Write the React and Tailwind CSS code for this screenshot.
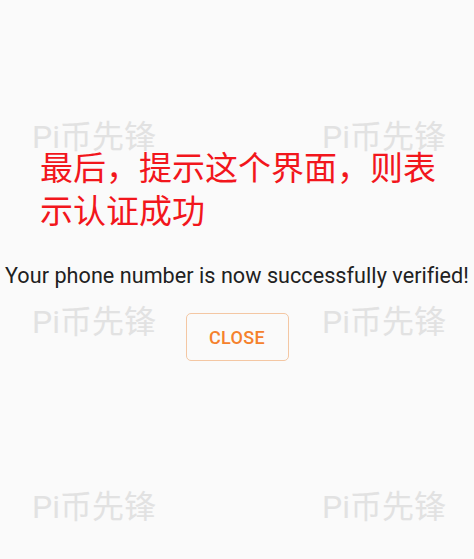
import React from 'react'

const font = { fontFamily: 'Roboto, "Noto Sans CJK SC", sans-serif' }

// faint repeated watermark layer behind the content
const Watermarks = () => (
  <div className="absolute inset-0 pt-[121px] pl-[32px] grid grid-cols-[290px_auto] auto-rows-[185px] content-start pointer-events-none select-none">
    {Array.from({ length: 6 }).map((_, i) => (
      <div key={i} className="text-[32px] leading-none text-[#e2e2e2]">Pi币先锋</div>
    ))}
  </div>
)

export default function App() {
  return (
    <div className="relative w-[474px] h-[559px] overflow-hidden bg-[#fafafa]" style={font}>
      <Watermarks />

      <div className="relative flex flex-col">
        <div className="pt-[145px] pl-[40px] pr-[30px] text-[33px] leading-[43px] text-[#f2161c]" style={{ fontFamily: '"Noto Sans CJK SC", sans-serif' }}>
          最后，提示这个界面，则表示认证成功
        </div>
        <p className="mt-[32px] text-center text-[21.6px] leading-[26px] tracking-[0.04px] text-[#212121] whitespace-nowrap">
          Your phone number is now successfully verified!
        </p>
        <div className="mt-[24px] flex justify-center">
          <button className="w-[103px] h-[48px] rounded-[5px] border border-[#f4c7a3] text-[#f5812c] text-[18px] font-medium tracking-[0.3px]">
            CLOSE
          </button>
        </div>
      </div>
    </div>
  )
}
